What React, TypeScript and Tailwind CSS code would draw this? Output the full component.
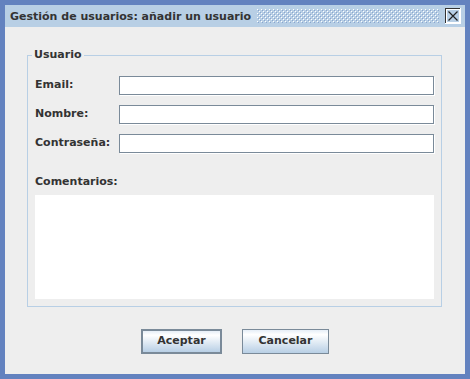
import React from "react";

const font = { fontFamily: '"DejaVu Sans", "Liberation Sans", sans-serif' };

function Bumps() {
  return (
    <svg className="w-full h-full">
      <defs>
        <pattern id="bumps" width="4" height="4" patternUnits="userSpaceOnUse">
          <rect x="0" y="0" width="1" height="1" fill="#ffffff" />
          <rect x="2" y="2" width="1" height="1" fill="#ffffff" />
          <rect x="1" y="1" width="1" height="1" fill="#8aa6cf" />
          <rect x="3" y="3" width="1" height="1" fill="#8aa6cf" />
        </pattern>
      </defs>
      <rect width="100%" height="100%" fill="url(#bumps)" />
    </svg>
  );
}

function CloseIcon() {
  return (
    <svg width="16" height="16" viewBox="0 0 16 16" shapeRendering="crispEdges" className="shrink-0">
      <rect x="0" y="0" width="16" height="16" fill="#ffffff" />
      <rect x="0" y="0" width="15" height="15" fill="#333333" />
      <rect x="1" y="1" width="14" height="14" fill="#ffffff" />
      <rect x="2" y="2" width="12" height="12" fill="#b8cfe5" />
      <path d="M3.5 3.5 L12.5 12.5 M12.5 3.5 L3.5 12.5" stroke="#222" strokeWidth="1.2" shapeRendering="auto" />
    </svg>
  );
}

function Field({ label }: { label: string }) {
  return (
    <div className="flex items-center h-[19px]">
      <span className="w-[84px] text-[11px] font-bold text-[#333333]">{label}</span>
      <div className="flex-1 h-[19px] bg-white border border-[#7a8a99] shadow-[1px_1px_0_#ffffff]" />
    </div>
  );
}

export default function App() {
  return (
    <div className="w-[470px] h-[379px] bg-[#6382bf] p-[5px]" style={font}>
      <div className="flex flex-col h-full bg-[#eeeeee]">
        <div className="flex items-center h-[22px] bg-[#b8cfe5] pl-[5px] pr-[4px]">
          <span className="shrink-0 whitespace-nowrap text-[11px] font-bold text-[#333333] leading-none">
            Gestión de usuarios: añadir un usuario
          </span>
          <div className="flex-1 h-[14px] mx-[6px]">
            <Bumps />
          </div>
          <CloseIcon />
        </div>
        <fieldset className="ml-[22px] mr-[23px] mt-[21px] border border-[#b8cfe5] pl-[7px] pr-[7px] pb-[7px]">
          <legend className="ml-[-3px] px-[2px] text-[11px] font-bold text-[#333333] leading-[14px]">
            Usuario
          </legend>
          <div className="flex flex-col gap-[10px] mt-[14px]">
            <Field label="Email:" />
            <Field label="Nombre:" />
            <Field label="Contraseña:" />
          </div>
          <div className="mt-[22px] text-[11px] font-bold text-[#333333] leading-[14px]">
            Comentarios:
          </div>
          <div className="mt-[6px] h-[104px] bg-white" />
        </fieldset>
        <div className="flex justify-center gap-[20px] mt-[22px]">
          <button className="w-[81px] h-[25px] border-2 border-[#7a8a99] bg-gradient-to-b from-[#e6eef7] via-white via-[20%] to-[#b8cfe5] text-[11px] font-bold text-[#333333]">
            Aceptar
          </button>
          <button className="w-[87px] h-[25px] border border-[#7a8a99] bg-gradient-to-b from-[#e6eef7] via-white via-[20%] to-[#b8cfe5] text-[11px] font-bold text-[#333333]">
            Cancelar
          </button>
        </div>
      </div>
    </div>
  );
}
